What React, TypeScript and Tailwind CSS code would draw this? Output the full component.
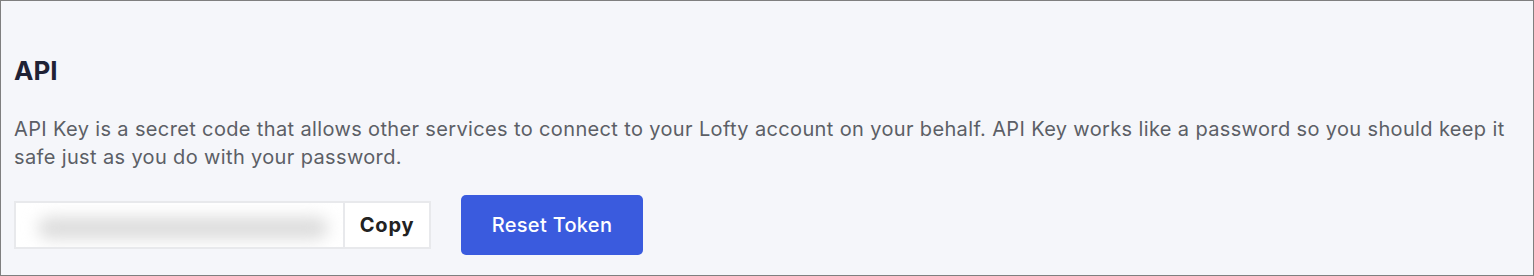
const ApiSection = () => {
  return (
    <div className="h-[276px] w-[1534px] overflow-hidden border border-[#7f7f7f] bg-[#f5f6fa] font-['Inter',sans-serif]">
      <section className="flex flex-col pl-[13px] pr-[8px] pt-[52px]">
        <h2 className="text-[26px] leading-[36px] font-bold text-[#1f2235]">API</h2>

        <p className="mt-[26px] text-[20px] leading-[28px] tracking-[0.36px] text-[#5c5f66]">
          API Key is a secret code that allows other services to connect to your Lofty account on your behalf. API Key
          works like a password so you should keep it safe just as you do with your password.
        </p>

        <div className="mt-[24px] flex items-center gap-[30px]">
          <div className="flex h-[48px] w-[417px] border-2 border-[#e8e9ec] bg-white">
            <div className="relative flex-1 overflow-hidden">
              <div className="absolute top-[14px] left-[22px] h-[22px] w-[290px] rounded-full bg-[#dcdcdc] blur-[8px]" />
            </div>
            <button className="flex w-[86px] items-center justify-center border-l-2 border-[#e8e9ec] text-[20px] font-bold tracking-[0.8px] text-[#222222]">
              Copy
            </button>
          </div>

          <button className="h-[60px] w-[182px] rounded-[5px] bg-[#3a5bde] text-[20px] font-medium tracking-[0.3px] text-white">
            Reset Token
          </button>
        </div>
      </section>
    </div>
  );
};

export default function App() {
  return <ApiSection />;
}
